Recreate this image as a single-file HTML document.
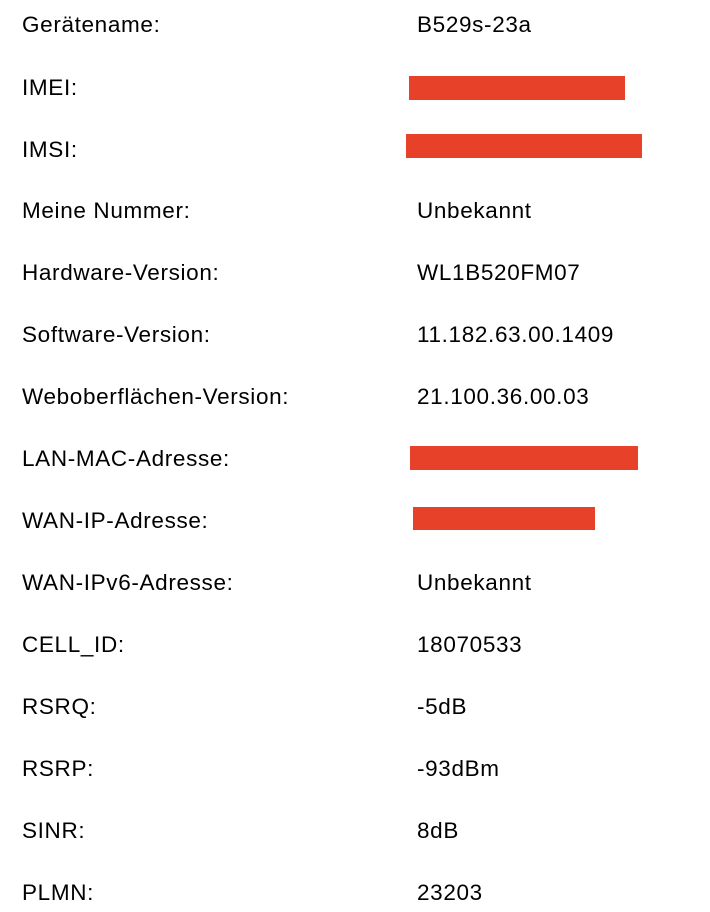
<!DOCTYPE html>
<html><head><meta charset="utf-8"><style>
body{margin:0;width:710px;height:912px;background:#fff;font-family:"Liberation Sans",Arial,sans-serif;font-size:22.5px;letter-spacing:0.65px;color:#000;position:relative;overflow:hidden}
.r{position:absolute;left:0;width:710px;height:30px;line-height:30px}
.l{position:absolute;left:22px}
.v{position:absolute;left:417px}
.b{position:absolute;background:#e84129}
</style></head><body>
<div class="r" style="top:10px"><span class="l">Gerätename:</span><span class="v">B529s-23a</span></div>
<div class="r" style="top:73px"><span class="l">IMEI:</span></div>
<div class="b" style="left:409px;top:76px;width:216px;height:24px"></div>
<div class="r" style="top:135px"><span class="l">IMSI:</span></div>
<div class="b" style="left:406px;top:134px;width:236px;height:24px"></div>
<div class="r" style="top:196px"><span class="l">Meine Nummer:</span><span class="v">Unbekannt</span></div>
<div class="r" style="top:258px"><span class="l">Hardware-Version:</span><span class="v">WL1B520FM07</span></div>
<div class="r" style="top:320px"><span class="l">Software-Version:</span><span class="v">11.182.63.00.1409</span></div>
<div class="r" style="top:382px"><span class="l">Weboberflächen-Version:</span><span class="v">21.100.36.00.03</span></div>
<div class="r" style="top:444px"><span class="l">LAN-MAC-Adresse:</span></div>
<div class="b" style="left:410px;top:446px;width:228px;height:24px"></div>
<div class="r" style="top:506px"><span class="l">WAN-IP-Adresse:</span></div>
<div class="b" style="left:413px;top:507px;width:182px;height:23px"></div>
<div class="r" style="top:568px"><span class="l">WAN-IPv6-Adresse:</span><span class="v">Unbekannt</span></div>
<div class="r" style="top:630px"><span class="l">CELL_ID:</span><span class="v">18070533</span></div>
<div class="r" style="top:692px"><span class="l">RSRQ:</span><span class="v">-5dB</span></div>
<div class="r" style="top:754px"><span class="l">RSRP:</span><span class="v">-93dBm</span></div>
<div class="r" style="top:816px"><span class="l">SINR:</span><span class="v">8dB</span></div>
<div class="r" style="top:878px"><span class="l">PLMN:</span><span class="v">23203</span></div>
</body></html>
